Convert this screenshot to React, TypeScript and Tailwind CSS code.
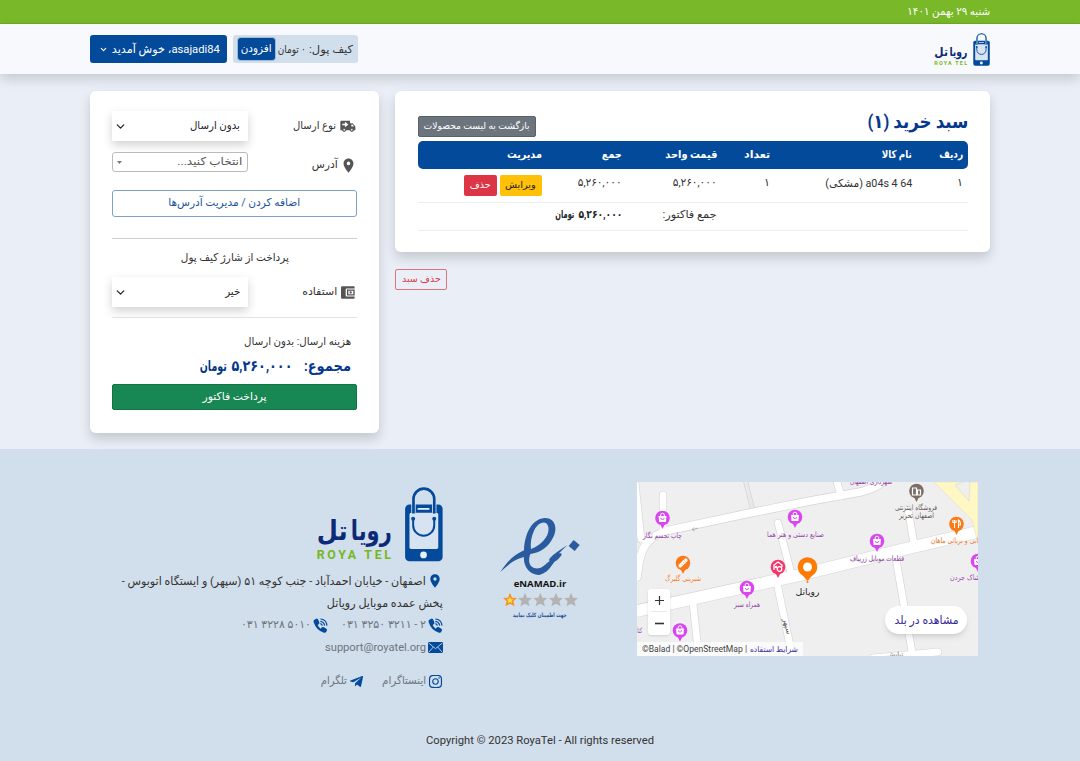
import { useLayoutEffect, useRef, useState } from "react";
import type { ReactNode } from "react";
import { MdLocationOn } from "react-icons/md";
import { FaInstagram, FaTelegramPlane } from "react-icons/fa";
import { ChevronDown } from "lucide-react";

/* Text that is condensed or stretched so that it fills the width of its box. */
function Fit({ className = "", dir = "rtl", children }: { className?: string; dir?: "rtl" | "ltr"; children: ReactNode }) {
  const box = useRef<HTMLSpanElement>(null);
  const inner = useRef<HTMLSpanElement>(null);
  const [scale, setScale] = useState(1);
  useLayoutEffect(() => {
    if (box.current && inner.current && inner.current.offsetWidth) {
      setScale(box.current.offsetWidth / inner.current.getBoundingClientRect().width);
    }
  }, []);
  return (
    <span ref={box} dir={dir} className={"block shrink-0 whitespace-nowrap " + className}>
      <span
        ref={inner}
        className={"inline-block " + (dir === "rtl" ? "origin-right" : "origin-left")}
        style={{ transform: `scaleX(${scale})` }}
      >
        {children}
      </span>
    </span>
  );
}

function Logo({ className }: { className: string }) {
  return (
    <svg className={className} viewBox="622 20 379 224" direction="ltr">
      <rect x="888" y="72" width="112" height="170" rx="13" fill="#034a9b" />
      <rect x="901" y="97" width="86" height="108" rx="5" fill="#d7e3f1" />
      <path d="M913 97V56a31 31 0 0 1 62 0v41" fill="none" stroke="#d7e3f1" strokeWidth="13" />
      <path d="M913 99V56a31 31 0 0 1 62 0v43" fill="none" stroke="#034a9b" strokeWidth="8" />
      <rect x="925" y="83" width="36" height="5" rx="2.500" fill="#e9f0f8" />
      <path d="M912 116v18a31 31 0 0 0 63 0v-18" fill="none" stroke="#034a9b" strokeWidth="6" />
      <circle cx="912" cy="115" r="6" fill="#034a9b" />
      <circle cx="975" cy="115" r="6" fill="#034a9b" />
      <circle cx="943" cy="223" r="10" fill="#e9f0f8" />
      <text x="848" y="179" direction="rtl" fontSize="82" fontWeight="700" fill="#0b2a78" className="font-['DejaVu_Sans',sans-serif]" textLength="122" lengthAdjust="spacingAndGlyphs">رویا</text>
      <text x="716" y="179" direction="rtl" fontSize="82" fontWeight="700" fill="#0b2a78" className="font-['DejaVu_Sans',sans-serif]" textLength="92" lengthAdjust="spacingAndGlyphs">تل</text>
      <text x="624" y="235" fontSize="37" fontWeight="700" letterSpacing="8" fill="#74b91c" className="font-['Roboto',sans-serif]" textLength="230">ROYA TEL</text>
    </svg>
  );
}

function Truck() {
  return (
    <svg className="h-[13px] w-4" viewBox="0 0 48 36">
      <path fill="#555" d="M3 1h27v7h8l8 10v11h-4a7 7 0 0 1-13 0H19a7 7 0 0 1-13 0H1V3zM34 12v6h8l-4-6z" />
      <path d="M7 12h11M15 6l7 6-7 6" fill="none" stroke="#fff" strokeWidth="4" />
      <circle cx="12.500" cy="28" r="4" fill="#fff" stroke="#555" strokeWidth="3" />
      <circle cx="35.500" cy="28" r="4" fill="#fff" stroke="#555" strokeWidth="3" />
    </svg>
  );
}

function Wallet() {
  return (
    <svg className="h-[13px] w-[14px]" viewBox="0 0 42 38">
      <path fill="#555" d="M4 0h34q3 0 3 4v3H18q-4 0-4 4v16q0 4 4 4h23v3q0 4-3 4H4q-4 0-4-4V4q0-4 4-4z" />
      <path fill="none" stroke="#555" strokeWidth="4" d="M20 12h19v14H20z" />
      <circle cx="29" cy="19" r="3.500" fill="#555" />
    </svg>
  );
}

function PhoneIcon() {
  return (
    <svg className="size-[15px] shrink-0" viewBox="0 0 45 45" fill="none">
      <path fill="#034a9b" d="M3 6 10 2q3-1 5 2l4 9q1 3-1 5l-4 3q3 7 9 11l4-4q2-2 4-1l9 5q3 2 2 5l-3 6q-2 2-6 1Q10 38 2 13 1 8 3 6z" />
      <path stroke="#034a9b" strokeWidth="3.500" d="M22 3q18 1 20 20M22 10q11 1 13 13M22 17q5 1 6 6" />
    </svg>
  );
}

function MailIcon() {
  return (
    <svg className="h-[11px] w-[15px] shrink-0" viewBox="0 0 45 33">
      <rect width="45" height="33" rx="3" fill="#034a9b" />
      <path d="M2 3l20.500 17L43 3M2 31l14-16M43 31L29 15" fill="none" stroke="#d1deeb" strokeWidth="2.600" />
    </svg>
  );
}

function Enamad() {
  return (
    <svg className="h-[130px] w-[110px]" viewBox="0 0 330 390" direction="ltr">
      <path fill="#295b9e" fillRule="evenodd" d="M31 216C53 181 75 163 102 151C104 99 126 58 163 54C194 53 204 82 190 111C176 141 151 158 121 162C112 185 119 207 145 205C160 203 168 190 179 183C172 178 190 165 201 156L232 135L207 160C224 158 210 171 201 181C185 187 183 216 148 225C119 226 99 199 102 171C76 176 54 194 31 216zM123 147C155 135 180 107 175 81C170 59 145 65 132 92C123 112 121 130 123 147z" />
      <path fill="#295b9e" d="M251 120l18 15-15 18-18-15z" />
      <text x="71" y="262" fontSize="24" fontWeight="700" fill="#111" textLength="158" lengthAdjust="spacingAndGlyphs" className="font-['Open_Sans',sans-serif]">eNAMAD.ir</text>
      {[60, 105, 151, 198, 243].map((x, i) => (
        <path
          key={x}
          transform={`translate(${x} 300)`}
          fill={i === 0 ? "#f7931e" : "#b3b3b3"}
          d="M0-22 6-7 21-6 10 4 14 19 0 11-14 19-10 4-21-6-6-7z"
        />
      ))}
      <path transform="translate(60 301) scale(.48)" fill="#ffe14d" d="M0-22 6-7 21-6 10 4 14 19 0 11-14 19-10 4-21-6-6-7z" />
      <text x="230" y="350" direction="rtl" fontSize="18" fontWeight="700" fill="#1f4f94" textLength="162" lengthAdjust="spacingAndGlyphs" className="font-['DejaVu_Sans',sans-serif]">جهت اطمینان کلیک نمایید</text>
    </svg>
  );
}

const roads = [
  "M0 129 163 93 276 65 345 49",
  "M0 95C3 61 12 54 33 48L113 31 173 19 223 10Q241 6 249-4",
  "M-2 0 4 57",
  "M26 13V52",
  "M199-4 204 14",
  "M141 41 154 91",
  "M56 121 62 178",
  "M140 101 156 178",
  "M271 27 277 62",
  "M259 77 275 170",
  "M236 176 301 170",
];

const bags = [
  [25.5, 36],
  [158, 35],
  [110, 106],
  [240, 59],
  [43, 148.5],
  [341, 79],
];

function MapPin({ x, y, color, children }: { x: number; y: number; color: string; children?: ReactNode }) {
  return (
    <g transform={`translate(${x} ${y})`}>
      <path d="M-3 5 0 11 3 5z" fill={color} />
      <circle r="7.300" fill={color} />
      {children}
    </g>
  );
}

function Label({ x, y, w, color, size = 7.5, children }: { x: number; y: number; w: number; color: string; size?: number; children: string }) {
  return (
    <text x={x + w} y={y} direction="rtl" fontSize={size} fill={color} stroke="#f5f4f6" strokeWidth="1.200" paintOrder="stroke" textLength={w} lengthAdjust="spacingAndGlyphs" className="font-['DejaVu_Sans',sans-serif]">
      {children}
    </text>
  );
}

function MapView() {
  return (
    <div className="relative h-[174px] w-[341px] overflow-hidden bg-[#efeff0]">
      <svg className="block h-[174px] w-[341px]" viewBox="0 0 341 174" direction="ltr">
        <g fill="none" strokeLinecap="round">
          <path d="M108-3 116 29" stroke="#d5d5d5" strokeWidth="5" />
          <path d="M108-3 116 29" stroke="#e9e9e9" strokeWidth="3.500" />
          {roads.map((d, i) => (
            <path key={d} d={d} stroke="#d4d4d6" strokeWidth={i === 0 ? 13 : i === 1 ? 9 : 8} />
          ))}
          {roads.map((d, i) => (
            <path key={d} d={d} stroke="#fff" strokeWidth={i === 0 ? 11.8 : i === 1 ? 7.8 : 6.8} />
          ))}
        </g>
        <path d="M297 0H341V61L335 38 325 28z" fill="#fff7c4" stroke="#dedbc2" strokeWidth=".5" />
        <path d="M318 3 329-1 333 0 332 19z" fill="#efeff0" stroke="#d9d6c0" strokeWidth=".6" />
        {bags.map(([x, y]) => (
          <MapPin key={x} x={x} y={y} color="#d946ef">
            <path d="M-4-2h8l-.6 6h-6.800z" fill="#fff" />
            <path d="M-1.800-2v-1a1.800 1.800 0 0 1 3.600 0v1" fill="none" stroke="#fff" strokeWidth="1" />
            <path d="M-1.600 0a1.600 1.600 0 0 0 3.200 0" fill="none" stroke="#d946ef" strokeWidth=".9" />
          </MapPin>
        ))}
        <MapPin x={46} y={81} color="#fb7916">
          <path d="M-2.800 2.800 2.800-2.800" stroke="#fff" strokeWidth="3.600" strokeLinecap="round" />
          <path d="M-1.800 .8-.8 1.800M0-1 1 0M1.500-2.500 2.500-1.500" stroke="#fb7916" strokeWidth=".6" />
        </MapPin>
        <MapPin x={319.5} y={42} color="#fb7916">
          <path d="M-2-4v8M-3.600-4v2.500h3.200V-4M2 4v-8q2 1 2 5H2" fill="none" stroke="#fff" strokeWidth="1.100" />
        </MapPin>
        <MapPin x={279.5} y={9} color="#7b6e66">
          <path d="M-4 4v-7h4v7zM1 4v-5h3v5z" fill="none" stroke="#fff" strokeWidth="1.200" />
        </MapPin>
        <MapPin x={141} y={85} color="#f6336b">
          <path d="M-4 3v-5l4-3 4 3v2" fill="none" stroke="#fff" strokeWidth="1.300" />
          <circle cx="1.500" cy="2" r="2.300" fill="none" stroke="#fff" strokeWidth="1.300" />
          <circle cx="-2" cy="0" r="1.300" fill="#fff" />
        </MapPin>
        <path d="M164.500 92 170.500 99 176.500 92z" fill="#ff7a00" />
        <circle cx="170.500" cy="85" r="9.800" fill="#ff7a00" />
        <circle cx="170.500" cy="85" r="4.500" fill="#fff" />
        <circle cx="170.500" cy="100" r="1" fill="#ff7a00" />
        <path d="M56 47.500 61 46M57 45.500 55 47.500 57.500 49" fill="none" stroke="#999" strokeWidth=".7" />
        <Label x={6} y={56} w={39} color="#8e3f9e">چاپ تجسم نگار</Label>
        <Label x={130} y={55} w={57} color="#8e3f9e">صنایع دستی و هنر هما</Label>
        <Label x={28} y={99} w={36} color="#ed7b29">شیرینی گلبرگ</Label>
        <Label x={97} y={125} w={26} color="#8e3f9e">همراه سبز</Label>
        <Label x={213} y={79} w={54} color="#8e3f9e">قطعات موبایل زریباف</Label>
        <Label x={213} y={2} w={42} color="#8e3f9e">شهرداری اصفهان</Label>
        <Label x={258} y={28} w={42} color="#62574f">فروشگاه اینترنتی</Label>
        <Label x={262} y={35.5} w={35} color="#62574f">اصفهان تحریر</Label>
        <Label x={294} y={60.5} w={52} color="#ed7b29">کبابی و بریانی ماهان</Label>
        <Label x={313} y={98} w={35} color="#8e3f9e">پوشاک جردن</Label>
        <Label x={158.5} y={113} w={24} size={9} color="#222">رویاتل</Label>
        <Label x={-4} y={151} w={9} color="#8e3f9e">کتاب</Label>
        <Label x={250} y={175} w={16} color="#666">نیایش</Label>
        <text x="0" y="0" transform="translate(146 137) rotate(76)" fontSize="7.500" fill="#555" className="font-['DejaVu_Sans',sans-serif]">سپهر</text>
      </svg>
      <div className="absolute left-[11px] top-[107px] flex h-[46px] w-[22px] flex-col items-center rounded-[3px] bg-white shadow">
        <span className="flex h-[23px] w-4 items-center justify-center border-b border-gray-200">
          <svg className="size-[9px]" viewBox="0 0 9 9"><path d="M0 4.500h9M4.500 0v9" stroke="#333" strokeWidth="1.200" /></svg>
        </span>
        <span className="flex h-[23px] items-center">
          <svg className="size-[9px]" viewBox="0 0 9 9"><path d="M0 4.500h9" stroke="#333" strokeWidth="1.600" /></svg>
        </span>
      </div>
      <div dir="ltr" className="absolute bottom-0 left-0 flex h-[14px] w-[166px] items-center gap-[3px] bg-white/70 pl-[5px] text-[9px] leading-[14px] text-[#444]">
        <Fit dir="ltr" className="w-[105px]">©Balad | ©OpenStreetMap |</Fit>
        <Fit className="w-[48px] text-[8.500px] text-[#4633a8]">شرایط استفاده</Fit>
      </div>
      <div className="absolute left-[248px] top-[124px] flex h-[28px] w-[82px] items-center justify-center rounded-full bg-white shadow-md">
        <Fit className="w-[64px] text-[11.500px] leading-[22px] text-[#38299b]">مشاهده در بلد</Fit>
      </div>
    </div>
  );
}

function Select({ children }: { children: ReactNode }) {
  return (
    <div className="flex h-[30px] w-[136px] items-center justify-between bg-white pl-[2px] pr-2 text-[11px] text-[#212529] shadow-[0_4px_9px_rgba(0,0,0,0.18)]">
      {children}
      <ChevronDown className="size-[13px]" strokeWidth={2.4} />
    </div>
  );
}

const columns = "grid grid-cols-[51px_142px_53px_95px_80px_129px] [&>*]:pr-[5px]";

export default function App() {
  return (
    <div dir="rtl" className="flex h-[761px] w-[1080px] flex-col overflow-hidden bg-[#eaeff7] font-['Roboto','DejaVu_Sans',sans-serif] text-[11px] text-[#212529]">
      <div className="h-[24px] shrink-0 border-b border-[#6cae1a] bg-[#78b829] px-[90px] text-white">
        <Fit className="w-[83px] text-[11px] leading-[23px]">شنبه ۲۹ بهمن ۱۴۰۱</Fit>
      </div>
      <header className="z-10 flex h-[50px] shrink-0 items-center justify-between bg-[#f8f9fc] px-[90px] shadow-[0_5px_11px_rgba(0,0,0,0.16)]">
        <Logo className="h-[33px] w-[56px]" />
        <div className="flex items-center gap-[6px]">
          <div className="flex h-[28px] w-[125px] items-center rounded-[3px] bg-[#d1deeb] pr-[5px]">
            <Fit className="w-[44px] leading-[25px] text-[#333]">کیف پول:</Fit>
            <Fit className="mr-[3px] w-[28px] leading-[25px] text-[#333]">۰ تومان</Fit>
            <button className="mr-[3px] flex h-[22px] w-[37px] items-center justify-center rounded-[3px] bg-[#034a9b] text-white ring-1 ring-[#9fb9d9]">
              <Fit className="w-[31px] leading-[18px]">افزودن</Fit>
            </button>
          </div>
          <button className="flex h-[28px] w-[137px] items-center gap-[4px] rounded-[3px] bg-[#034a9b] pr-[7px] text-white">
            <Fit className="w-[108px] text-[11.500px] leading-[26px]">asajadi84، خوش آمدید</Fit>
            <ChevronDown className="size-[9px]" strokeWidth={3} />
          </button>
        </div>
      </header>

      <main className="flex h-[375px] shrink-0 items-start gap-4 px-[90px] pt-[17px]">
        <section className="flex w-[595px] flex-col">
          <div className="flex h-[161px] flex-col rounded-[6px] bg-white pl-[23px] pr-[22px] pt-[17px] shadow-[0_6px_12px_rgba(0,0,0,0.17)]">
            <div className="flex h-[33px] justify-between">
              <Fit className="w-[101px] text-[19px] font-bold leading-[28px] text-[#05388c]">سبد خرید (۱)</Fit>
              <button className="mt-[8px] flex h-[21px] w-[118px] justify-center rounded-[2px] border border-[#59626a] bg-[#6c757d] text-white">
                <Fit className="w-[106px] text-[9.500px] leading-[18px]">بازگشت به لیست محصولات</Fit>
              </button>
            </div>
            <div className={columns + " h-[28px] rounded-[5px] bg-[#034a9b] text-[11px] font-bold leading-[27px] text-white"}>
              <div><Fit className="w-[24px]">ردیف</Fit></div>
              <div><Fit className="w-[30px]">نام کالا</Fit></div>
              <div><Fit className="w-[26px]">تعداد</Fit></div>
              <div><Fit className="w-[52px]">قیمت واحد</Fit></div>
              <div><Fit className="w-[20px]">جمع</Fit></div>
              <div><Fit className="w-[35px]">مدیریت</Fit></div>
            </div>
            <div className={columns + " h-[34px] border-b border-[#eceef0] leading-[27px] text-[#333]"}>
              <div>۱</div>
              <div><Fit className="w-[87px] leading-[29px]">a04s 4 64 (مشکی)</Fit></div>
              <div>۱</div>
              <div><Fit className="w-[44px]">۵,۲۶۰,۰۰۰</Fit></div>
              <div><Fit className="w-[44px]">۵,۲۶۰,۰۰۰</Fit></div>
              <div className="flex gap-[3px] pt-[6px] leading-[19px]">
                <button className="flex h-[21px] w-[42px] justify-center rounded-[2px] bg-[#ffc107] text-[9.500px] text-[#222]"><Fit className="w-[31px]">ویرایش</Fit></button>
                <button className="flex h-[21px] w-[33px] justify-center rounded-[2px] bg-[#dc3545] text-[9.500px] text-white"><Fit className="w-[21px]">حذف</Fit></button>
              </div>
            </div>
            <div className={columns + " h-[28px] border-b border-[#eceef0] leading-[24px]"}>
              <div className="col-start-4"><Fit className="w-[54px] text-[#333]">جمع فاکتور:</Fit></div>
              <div className="flex gap-[4px] font-bold">
                <Fit className="w-[44px]">۵,۲۶۰,۰۰۰</Fit>
                <Fit className="w-[19px]">تومان</Fit>
              </div>
            </div>
          </div>
          <button className="mt-[17px] flex h-[21px] w-[52px] justify-center self-end rounded-[2px] border border-[#e0727d] text-[#dc3545]">
            <Fit className="w-[39px] text-[9.500px] leading-[18px]">حذف سبد</Fit>
          </button>
        </section>

        <aside className="flex h-[342px] w-[289px] flex-col rounded-[6px] bg-white px-[22px] pt-[20px] shadow-[0_6px_12px_rgba(0,0,0,0.17)]">
          <div className="flex h-[30px] items-center justify-between">
            <div className="flex items-center gap-[4px] pr-[1px]">
              <Truck />
              <Fit className="w-[43px] leading-[28px] text-[#333]">نوع ارسال</Fit>
            </div>
            <Select><Fit className="w-[50px] leading-[26px]">بدون ارسال</Fit></Select>
          </div>
          <div className="mt-[11px] flex h-[20px] items-start justify-between">
            <div className="flex items-center gap-[2px]">
              <MdLocationOn className="mt-[1px] size-[17px] text-[#555]" />
              <Fit className="w-[26px] leading-[25px] text-[#333]">آدرس</Fit>
            </div>
            <div className="flex h-[20px] w-[136px] items-center justify-between rounded-[3px] border border-[#bbb] pl-[4px] pr-[5px]">
              <Fit className="w-[65px] leading-[16px] text-[#555]">انتخاب کنید...</Fit>
              <svg className="h-[3px] w-[5px]" viewBox="0 0 5 3"><path d="M0 0h5L2.500 3z" fill="#777" /></svg>
            </div>
          </div>
          <button className="mt-[18px] flex h-[27px] shrink-0 justify-center rounded-[3px] border border-[#7ca1cc] text-[#1b559f]">
            <Fit className="w-[132px] leading-[23px]">اضافه کردن / مدیریت آدرس‌ها</Fit>
          </button>
          <hr className="mt-[21px] border-[#cdcfd2]" />
          <div className="flex h-[38px] justify-center"><Fit className="w-[108px] leading-[37px] text-[#333]">پرداخت از شارژ کیف پول</Fit></div>
          <div className="flex h-[30px] items-center justify-between">
            <div className="flex items-center gap-[4px] pr-[2px]">
              <Wallet />
              <Fit className="w-[35px] leading-[28px] text-[#333]">استفاده</Fit>
            </div>
            <Select><Fit className="w-[15px] leading-[26px]">خیر</Fit></Select>
          </div>
          <hr className="mt-[10px] border-[#e2e3e5]" />
          <Fit className="mr-[6px] mt-[13px] w-[107px] leading-[22px] text-[#333]">هزینه ارسال: بدون ارسال</Fit>
          <div className="mr-[6px] flex h-[31px] gap-[12px] text-[15px] font-bold leading-[26px] text-[#05388c]">
            <Fit className="w-[47px]">مجموع:</Fit>
            <div className="flex gap-[4px]">
              <Fit className="w-[61px]">۵,۲۶۰,۰۰۰</Fit>
              <Fit className="w-[27px]">تومان</Fit>
            </div>
          </div>
          <button className="flex h-[26px] shrink-0 justify-center rounded-[2px] border border-[#117543] bg-[#198754] text-white">
            <Fit className="w-[64px] leading-[23px]">پرداخت فاکتور</Fit>
          </button>
        </aside>
      </main>

      <footer className="flex h-[312px] flex-col bg-[#d1deeb] pl-[90px] pr-[102px]">
        <div className="flex h-[281px] items-start">
          <div className="pt-[33px]"><MapView /></div>
          <div className="mr-[37px] pt-[51px]"><Enamad /></div>
          <div className="mr-[47px] flex w-[331px] flex-col pt-[38px]">
            <Logo className="h-[75px] w-[127px]" />
            <div className="mt-[8px] flex h-[22px] items-center">
              <MdLocationOn className="size-[16px] text-[#034a9b]" />
              <Fit className="mr-[1px] w-[304px] text-[11.500px] leading-[20px] text-[#333]">اصفهان - خیابان احمدآباد - جنب کوچه ۵۱ (سپهر) و ایستگاه اتوبوس -</Fit>
            </div>
            <Fit className="w-[116px] text-[11.500px] leading-[22px] text-[#333]">پخش عمده موبایل رویاتل</Fit>
            <div className="flex h-[22px] items-center text-[#6c757d]">
              <PhoneIcon />
              <Fit dir="ltr" className="mr-[2px] w-[85px] leading-[20px]">۰۳۱ ۳۲۵۰ ۳۲۱۱ - ۲</Fit>
              <span className="w-[13px]" />
              <PhoneIcon />
              <Fit dir="ltr" className="mr-[2px] w-[70px] leading-[20px]">۰۳۱ ۳۲۲۸ ۵۰۱۰</Fit>
            </div>
            <div className="flex h-[22px] items-center gap-[2px] text-[#6c757d]">
              <MailIcon />
              <Fit dir="ltr" className="w-[101px] text-[11.500px] leading-[20px]">support@royatel.org</Fit>
            </div>
            <div className="mt-[12px] flex h-[22px] items-center text-[#6c757d]">
              <FaInstagram className="size-[15px] text-[#034a9b]" />
              <Fit className="mr-[2px] w-[44px] leading-[20px]">اینستاگرام</Fit>
              <FaTelegramPlane className="mr-[18px] size-[15px] text-[#034a9b]" />
              <Fit className="mr-[2px] w-[26px] leading-[20px]">تلگرام</Fit>
            </div>
          </div>
        </div>
        <div className="flex w-full justify-center pl-[12px]">
          <Fit dir="ltr" className="w-[228px] text-[11px] leading-[22px] text-[#333]">Copyright © 2023 RoyaTel - All rights reserved</Fit>
        </div>
      </footer>
    </div>
  );
}
